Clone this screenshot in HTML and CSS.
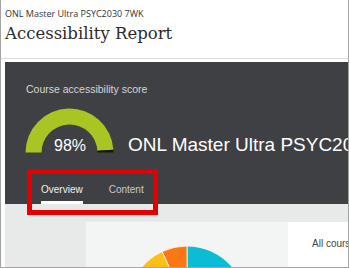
FILE: index.html
```html
<!DOCTYPE html>
<html lang="en">
<head>
<meta charset="utf-8">
<title>Accessibility Report</title>
<link rel="stylesheet" href="styles.css">
</head>
<body>
<div class="frame">
  <header class="page-head">
    <div class="crumb">ONL Master Ultra PSYC2030 7WK</div>
    <h1 class="title">Accessibility Report</h1>
  </header>
  <main class="content">
    <section class="hero">
      <div class="score-label">Course accessibility score</div>
      <div class="score-row">
        <div class="gauge">
          <svg class="gauge-svg" width="90" height="45" viewBox="0 0 90 45" aria-hidden="true">
            <path class="gauge-fill" d="M0.5,44.5 A44,44 0 0 1 88.41,41.74 L72.44,42.74 A28,28 0 0 0 16.5,44.5 Z"/>
            <path class="gauge-rest" d="M88.41,41.74 A44,44 0 0 1 88.5,44.5 L72.5,44.5 A28,28 0 0 0 72.44,42.74 Z"/>
          </svg>
          <span class="pct">98%</span>
        </div>
        <div class="course-name">ONL Master Ultra PSYC2030 7WK</div>
      </div>
      <nav class="tabs">
        <a class="tab tab-active">Overview</a>
        <a class="tab">Content</a>
      </nav>
    </section>
    <div class="highlight"></div>
    <section class="overview">
      <div class="gutter"></div>
      <div class="chart-card">
        <svg class="pie" width="118" height="60" viewBox="0 0 118 60" aria-hidden="true">
          <path class="pie-cyan" d="M59,59 L59,0 A59,59 0 1 1 38.8,114.4 Z"/>
          <path class="pie-yellow" d="M59,59 L38.8,114.4 A59,59 0 0 1 34.1,5.5 Z"/>
          <path class="pie-orange" d="M59,59 L34.1,5.5 A59,59 0 0 1 59,0 Z"/>
        </svg>
      </div>
      <div class="summary">
        <p class="summary-text">All course content</p>
      </div>
    </section>
  </main>
</div>
</body>
</html>
```
FILE: styles.css
```css
* { box-sizing: border-box; }
html, body { margin: 0; padding: 0; background: #fff; }

.frame {
  width: 349px;
  height: 268px;
  border: 1px solid #a4a4a4;
  border-top: none;
  overflow: hidden;
  background: #fff;
  display: flex;
  flex-direction: column;
}

.page-head {
  height: 59px;
  flex: none;
  padding: 8px 0 0 4px;
  border-bottom: 1px solid #dcdcdc;
}
.crumb {
  font-family: "Open Sans", sans-serif;
  font-size: 9px;
  line-height: 12px;
  color: #333;
  white-space: nowrap;
}
.title {
  margin: 4px 0 0;
  font-family: "DejaVu Serif", serif;
  font-weight: normal;
  font-size: 16.5px;
  line-height: 20px;
  color: #2b2b2b;
  white-space: nowrap;
}

.content {
  position: relative;
  flex: 1;
  margin: 3px 0 0 4px;
  display: flex;
  flex-direction: column;
  min-height: 0;
}

.hero {
  height: 142px;
  flex: none;
  background: #3f4044;
  overflow: hidden;
  display: flex;
  flex-direction: column;
  padding-top: 21px;
  font-family: "Liberation Sans", Arial, sans-serif;
}
.score-label {
  margin-left: 21px;
  font-size: 10.5px;
  line-height: 12px;
  color: #d6d6d6;
  white-space: nowrap;
}
.score-row {
  display: flex;
  align-items: flex-start;
  margin-top: 13px;
  margin-left: 20px;
}
.gauge {
  position: relative;
  width: 90px;
  height: 45px;
  flex: none;
}
.gauge-svg { display: block; }
.gauge-fill { fill: #a9c524; }
.gauge-rest { fill: #151515; }
.pct {
  position: absolute;
  left: 0;
  right: 0;
  top: 30px;
  text-align: center;
  font-size: 16px;
  line-height: 16px;
  color: #fff;
}
.course-name {
  margin-left: 13px;
  margin-top: 25px;
  font-size: 19px;
  line-height: 23px;
  color: #fff;
  white-space: nowrap;
  flex: none;
}

.tabs {
  margin-top: auto;
  margin-left: 36px;
  display: flex;
  gap: 26px;
}
.tab {
  font-size: 10px;
  line-height: 12px;
  padding-bottom: 5px;
  border-bottom: 3px solid transparent;
  color: #c9c9c9;
  white-space: nowrap;
}
.tab-active {
  color: #f0f0f0;
  border-bottom-color: #fff;
}

.highlight {
  position: absolute;
  left: 22px;
  top: 107px;
  width: 131px;
  height: 46px;
  border: 5px solid #e40000;
}

.overview {
  flex: 1;
  min-height: 0;
  background: #e8e9e9;
  display: flex;
  padding-top: 18px;
  overflow: hidden;
}
.gutter { width: 81px; flex: none; }
.chart-card {
  width: 202px;
  flex: none;
  background: #f3f4f4;
  overflow: hidden;
  padding: 24px 0 0 42px;
}
.pie { display: block; }
.pie path { stroke: #fff; stroke-width: 0.8; }
.pie-cyan { fill: #0cbcd5; }
.pie-orange { fill: #fa7811; }
.pie-yellow { fill: #fdbf17; }

.summary {
  flex: 1;
  min-width: 0;
  background: #fff;
  padding: 16px 0 0 24px;
  overflow: hidden;
}
.summary-text {
  margin: 0;
  font-family: "Liberation Sans", Arial, sans-serif;
  font-size: 10px;
  line-height: 12px;
  color: #444;
  white-space: nowrap;
}
```
